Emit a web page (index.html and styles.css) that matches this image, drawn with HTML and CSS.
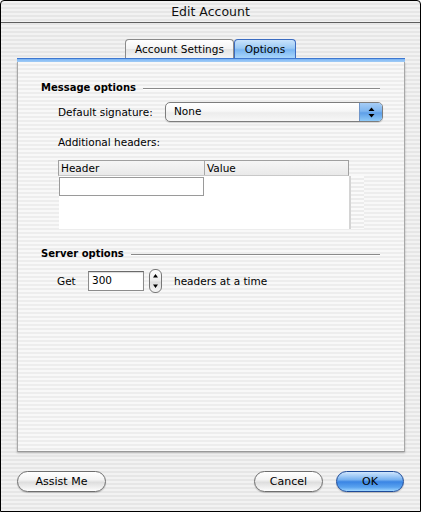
FILE: index.html
```html
<!DOCTYPE html>
<html>
<head>
<meta charset="utf-8">
<title>Edit Account</title>
<link rel="stylesheet" href="styles.css">
</head>
<body>
<div class="window">
  <div class="titlebar">Edit Account</div>
  <div class="content">
    <div class="tabs">
      <div class="tab">Account Settings</div>
      <div class="tab active">Options</div>
    </div>
    <div class="tabview">
      <div class="bar"></div>
      <div class="panel">
        <div class="section">
          <span class="section-title">Message options</span>
          <span class="rule"></span>
        </div>
        <div class="row sig-row">
          <span class="label">Default signature:</span>
          <div class="popup">
            <span class="popup-text">None</span>
            <span class="popup-arrows">
              <svg width="7" height="11" viewBox="0 0 7 11"><path d="M3.5 0.5 L6.5 4 L0.5 4 Z M0.5 7 L6.5 7 L3.5 10.5 Z" fill="#000"/></svg>
            </span>
          </div>
        </div>
        <div class="row add-row">Additional headers:</div>
        <div class="table">
          <div class="thead">
            <div class="th th-header">Header</div>
            <div class="th th-value">Value</div>
          </div>
          <div class="tbody-wrap">
            <div class="tbody">
              <div class="cell-edit"></div>
            </div>
            <div class="scroll"></div>
          </div>
        </div>
        <div class="section server">
          <span class="section-title">Server options</span>
          <span class="rule"></span>
        </div>
        <div class="row get-row">
          <span class="get">Get</span>
          <div class="field">300</div>
          <div class="stepper">
            <svg width="13" height="24" viewBox="0 0 13 24"><path d="M6.5 5 L9 8.5 L4 8.5 Z M4 15.5 L9 15.5 L6.5 19 Z" fill="#000"/></svg>
          </div>
          <span class="after">headers at a time</span>
        </div>
      </div>
    </div>
    <div class="buttons">
      <div class="btn assist">Assist Me</div>
      <div class="spacer"></div>
      <div class="btn cancel">Cancel</div>
      <div class="btn ok">OK</div>
    </div>
  </div>
</div>
</body>
</html>
```
FILE: styles.css
```css
html, body {
  margin: 0;
  padding: 0;
  background: #fff;
}
.window {
  width: 421px;
  height: 512px;
  box-sizing: border-box;
  border: 1px solid #000;
  border-radius: 4px 4px 0 0;
  overflow: hidden;
  font-family: "DejaVu Sans", sans-serif;
  font-size: 10.5px;
  color: #000;
  background: repeating-linear-gradient(to bottom, #f2f2f2 0px, #f2f2f2 2px, #e6e6e6 2px, #e6e6e6 4px);
}
.titlebar {
  height: 21px;
  border-bottom: 1px solid #5e5e5e;
  text-align: center;
  font-size: 12.5px;
  line-height: 22px;
  color: #111;
}
.content {
  padding-top: 16px;
}
.tabs {
  display: flex;
  justify-content: center;
  height: 19px;
}
.tab {
  box-sizing: border-box;
  height: 19px;
  padding: 0 9px;
  border: 1px solid #8a8a8a;
  border-bottom: none;
  border-radius: 4px 4px 0 0;
  line-height: 19px;
  background: linear-gradient(to bottom, #ffffff 0%, #f3f3f3 50%, #e4e4e4 51%, #f4f4f4 100%);
  width: 109px;
  text-align: center;
}
.tab.active {
  width: 62px;
  border-color: #3c6cc0;
  background: linear-gradient(to bottom, #c9e3fb 0%, #9ccaf5 45%, #7ab6f2 55%, #a9d6fb 100%);
  margin-left: 0;
}
.tabview {
  margin-left: 16px;
  width: 388px;
}
.bar {
  height: 4px;
  box-sizing: border-box;
  border-top: 1px solid #3f78d0;
  background: linear-gradient(to bottom, #78b2f2, #a6d1fa);
}
.panel {
  box-sizing: border-box;
  height: 390px;
  border: 1px solid #a8a8a8;
  border-top: none;
  border-bottom-color: #999;
  box-shadow: 0 1px 2px rgba(0,0,0,0.25);
  padding: 18px 24px 0 23px;
  background: repeating-linear-gradient(to bottom, #f8f8f8 0px, #f8f8f8 2px, #ededed 2px, #ededed 4px);
}
.section {
  display: flex;
  align-items: center;
  height: 14px;
}
.section-title {
  font-weight: bold;
  font-size: 10px;
  white-space: nowrap;
}
.rule {
  flex: 1;
  height: 1px;
  background: #8a8a8a;
  margin-left: 7px;
  margin-top: 4px;
  border-bottom: 1px solid #fff;
}
.row {
  display: flex;
  align-items: center;
  padding-left: 17px;
}
.sig-row {
  margin-top: 8px;
  height: 20px;
  margin-right: -3px;
}
.label {
  width: 107px;
  flex: none;
  white-space: nowrap;
}
.popup {
  flex: 1;
  height: 20px;
  box-sizing: border-box;
  border: 1px solid #7d7d7d;
  border-radius: 5px;
  display: flex;
  overflow: hidden;
  background: linear-gradient(to bottom, #ffffff 0%, #f7f7f7 45%, #ececec 55%, #f7f7f7 100%);
  box-shadow: 0 1px 1px rgba(0,0,0,0.15);
}
.popup-text {
  flex: 1;
  padding-left: 8px;
  line-height: 16px;
}
.popup-arrows {
  width: 22px;
  border-left: 1px solid #6f95c9;
  display: flex;
  align-items: center;
  justify-content: center;
  background: linear-gradient(to bottom, #a6cdf6 0%, #7fb6f0 45%, #5e9fe8 55%, #8fcaf8 100%);
}
.add-row {
  margin-top: 13px;
  height: 14px;
}
.table {
  margin-top: 11px;
  margin-left: 17px;
  width: 306px;
}
.thead {
  display: flex;
  width: 291px;
  height: 16px;
  box-sizing: border-box;
  border: 1px solid #a0a0a0;
  border-bottom: 1px solid #c8c8c8;
  background: linear-gradient(to bottom, #f6f6f6, #e9e9e9);
}
.th {
  line-height: 15px;
  padding-left: 2px;
}
.th-header {
  width: 143px;
  border-right: 1px solid #a8a8a8;
}
.th-value {
  flex: 1;
}
.tbody-wrap {
  display: flex;
  height: 53px;
}
.tbody {
  width: 290px;
  margin-left: 1px;
  background: #fff;
  padding-top: 1px;
  box-sizing: border-box;
}
.cell-edit {
  width: 145px;
  height: 19px;
  box-sizing: border-box;
  border: 1px solid #9a9a9a;
  background: #fff;
}
.scroll {
  flex: 1;
  border-left: 2px solid #d4d4d4;
  background: repeating-linear-gradient(to bottom, #fafafa 0px, #fafafa 2px, #ececec 2px, #ececec 4px);
}
.server {
  margin-top: 17px;
}
.get-row {
  margin-top: 9px;
  height: 24px;
  padding-left: 16px;
}
.get {
  width: 31px;
  flex: none;
}
.field {
  width: 56px;
  height: 20px;
  box-sizing: border-box;
  border: 1px solid #8c8c8c;
  border-top-color: #6a6a6a;
  background: #fff;
  padding-left: 3px;
  line-height: 16px;
  box-shadow: inset 0 1px 1px rgba(0,0,0,0.15);
}
.stepper {
  width: 13px;
  height: 24px;
  margin-left: 5px;
  box-sizing: border-box;
  border: 1px solid #777;
  border-radius: 6px;
  background: linear-gradient(to bottom, #ffffff 0%, #eeeeee 45%, #dddddd 55%, #f5f5f5 100%);
  display: flex;
  align-items: center;
  justify-content: center;
  overflow: hidden;
}
.stepper svg {
  flex: none;
}
.after {
  margin-left: 12px;
}
.buttons {
  display: flex;
  margin-top: 19px;
  padding-left: 16px;
  padding-right: 16px;
}
.spacer {
  flex: 1;
}
.btn {
  height: 21px;
  box-sizing: border-box;
  border: 1px solid #6e6e6e;
  border-radius: 11px;
  text-align: center;
  line-height: 19px;
  font-size: 11px;
  background: linear-gradient(to bottom, #ffffff 0%, #f4f4f4 40%, #dedede 55%, #f2f2f2 85%, #ffffff 100%);
  box-shadow: 0 1px 1px rgba(0,0,0,0.2);
}
.assist {
  width: 89px;
}
.cancel {
  width: 69px;
}
.ok {
  width: 68px;
  margin-left: 13px;
  border-color: #1d4a98;
  background: linear-gradient(to bottom, #cfe6fd 0%, #78b2f1 40%, #3a85e4 52%, #5aa3ef 80%, #9fd6ff 100%);
}
```
